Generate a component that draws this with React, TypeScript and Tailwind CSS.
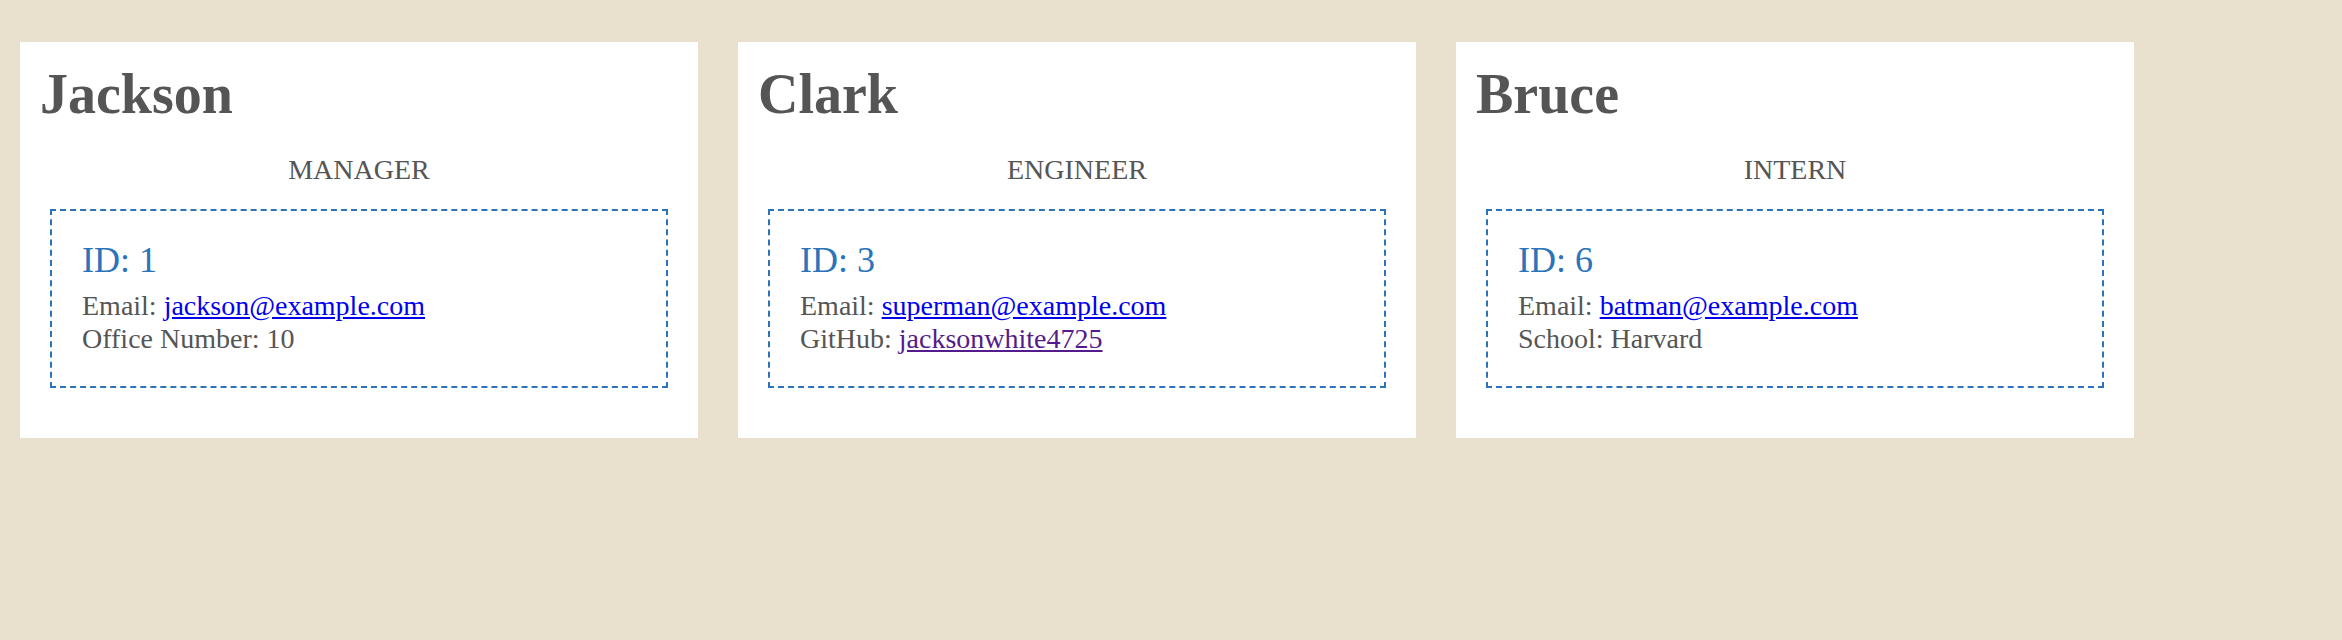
import React from 'react';

type Member = {
  name: string;
  role: string;
  id: number;
  email: string;
  extraLabel: string;
  extraValue: string;
  extraLink?: boolean;
};

const TEAM: Member[] = [
  {
    name: 'Jackson',
    role: 'MANAGER',
    id: 1,
    email: 'jackson@example.com',
    extraLabel: 'Office Number',
    extraValue: '10',
  },
  {
    name: 'Clark',
    role: 'ENGINEER',
    id: 3,
    email: 'superman@example.com',
    extraLabel: 'GitHub',
    extraValue: 'jacksonwhite4725',
    extraLink: true,
  },
  {
    name: 'Bruce',
    role: 'INTERN',
    id: 6,
    email: 'batman@example.com',
    extraLabel: 'School',
    extraValue: 'Harvard',
  },
];

const MemberCard: React.FC<{ member: Member }> = ({ member }) => (
  <div className="w-[678px] bg-white p-[20px] text-[#555555]">
    <h1 className="text-[56px] font-bold leading-[64px]">{member.name}</h1>
    <p className="mt-[28px] text-center text-[28px] leading-[32px]">{member.role}</p>
    <div className="mx-[10px] mb-[30px] mt-[23px] border-2 border-dashed border-[#2b73ba] pb-[31px] pl-[30px] pr-[30px] pt-[29px]">
      <h2 className="text-[36px] leading-[41px] text-[#2b73ba]">ID: {member.id}</h2>
      <div className="mt-[9px] text-[28px] leading-[32.5px]">
        <p>
          Email:{' '}
          <a href="#" className="text-[#0000ee] underline">
            {member.email}
          </a>
        </p>
        <p>
          {member.extraLabel}:{' '}
          {member.extraLink ? (
            <a href="#" className="text-[#551a8b] underline">
              {member.extraValue}
            </a>
          ) : (
            member.extraValue
          )}
        </p>
      </div>
    </div>
  </div>
);

export default function App() {
  return (
    <div
      className="min-h-[640px] bg-[#eae0ce] pl-[20px] pt-[42px]"
      style={{ fontFamily: '"Liberation Serif", "Times New Roman", serif' }}
    >
      <div className="flex items-start gap-[40px]">
        {TEAM.map((m) => (
          <MemberCard key={m.id} member={m} />
        ))}
      </div>
    </div>
  );
}
